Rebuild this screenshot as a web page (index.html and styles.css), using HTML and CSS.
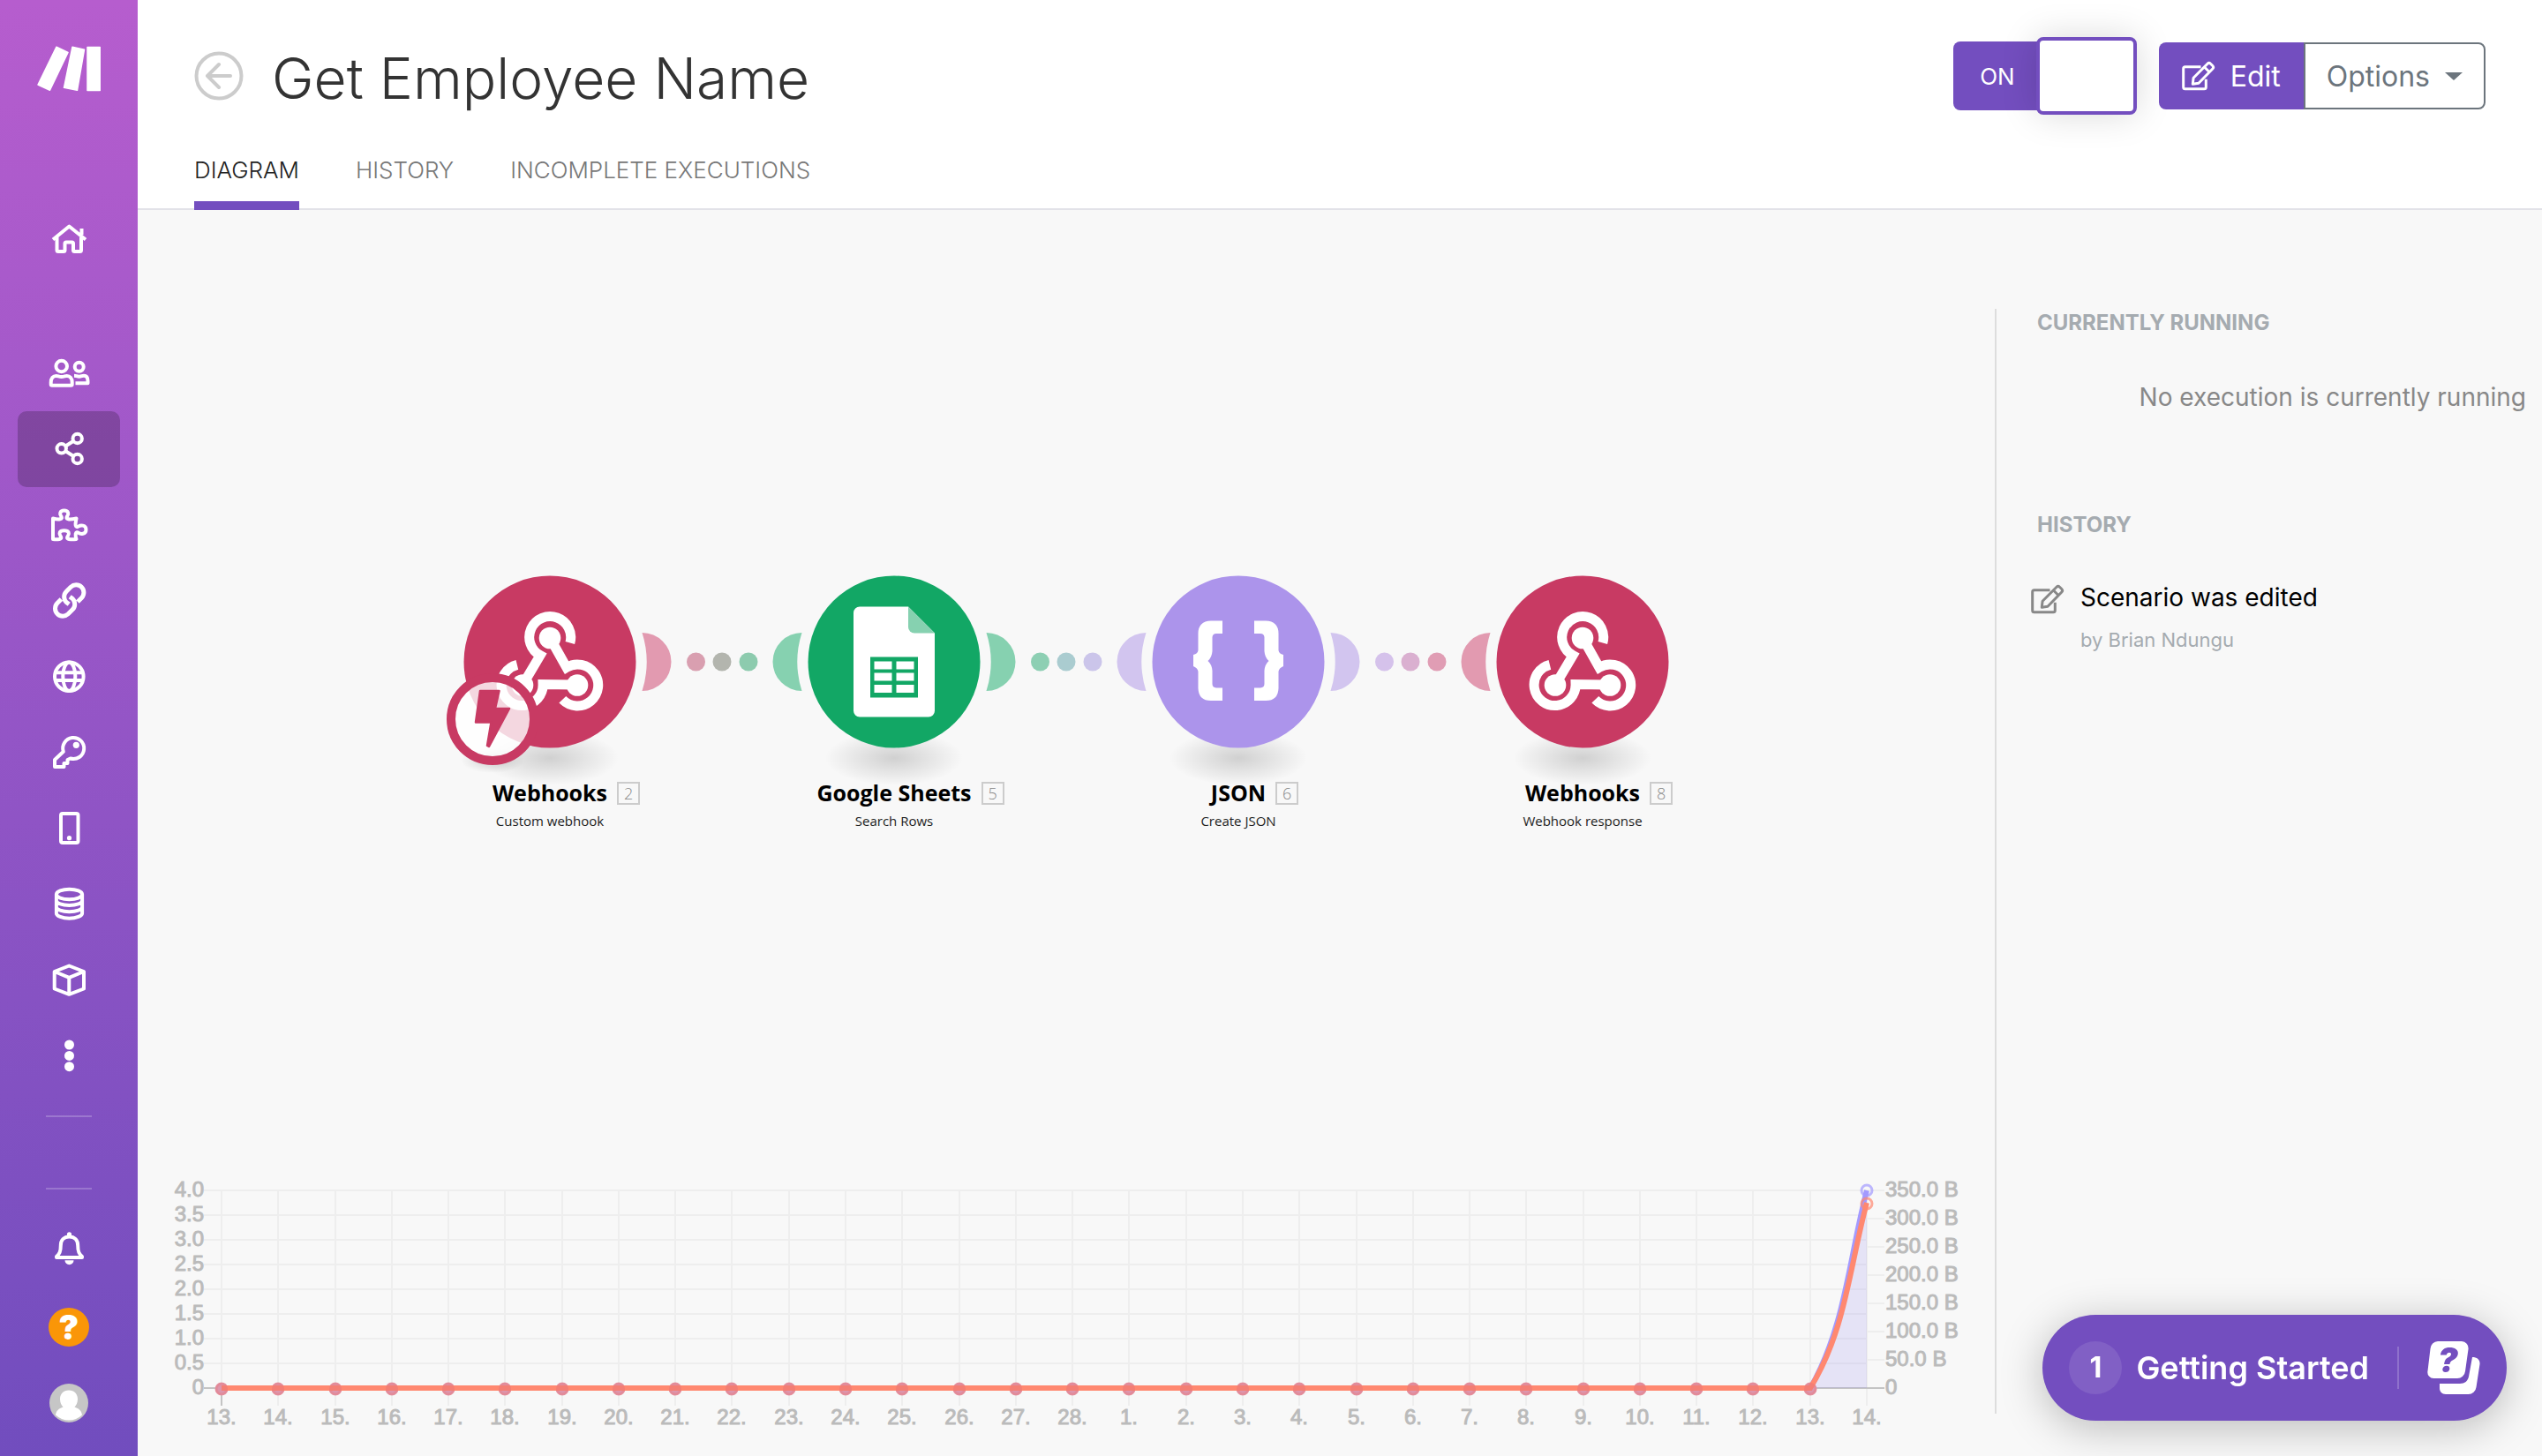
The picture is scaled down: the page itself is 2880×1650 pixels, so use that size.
FILE: index.html
```html
<!DOCTYPE html>
<html lang="en">
<head>
<meta charset="utf-8">
<title>Get Employee Name</title>
<link rel="stylesheet" href="styles.css">
</head>
<body>
<svg class="defs" aria-hidden="true">
  <defs>
    <radialGradient id="shade"><stop offset="0" stop-color="#000" stop-opacity=".16"/><stop offset=".5" stop-color="#000" stop-opacity=".08"/><stop offset="1" stop-color="#000" stop-opacity="0"/></radialGradient>
    <path id="ear" d="M104.500 -33A33 33 0 0 1 104.500 33A109 109 0 0 0 104.500 -33z"/>
    <path id="hook" d="M22.800 -21.500A23.500 23.500 0 1 0 -11 -7.300L-29 23"/>
    <g id="webhook">
      <g fill="none" stroke="#fff" stroke-width="11">
        <use href="#hook"/><use href="#hook" transform="rotate(120 0 8.200)"/><use href="#hook" transform="rotate(240 0 8.200)"/>
      </g>
      <g fill="#fff"><circle cy="-27" r="12.300"/><circle cx="-31" cy="26.500" r="12.300"/><circle cx="31" cy="26.500" r="12.300"/></g>
    </g>
    <g id="pencil" fill="none" stroke="currentColor" stroke-width="3" stroke-linejoin="round">
      <path d="M21.500 6.700H3.700a2 2 0 0 0-2 2v21a2 2 0 0 0 2 2h21.600a2 2 0 0 0 2-2v-9"/>
      <path d="M12.300 26.200l.8-7L29 3.200a2.500 2.500 0 0 1 3.500 0l2.300 2.300a2.500 2.500 0 0 1 0 3.500L19 25.200zM25.500 7l5.500 5.500"/>
    </g>
  </defs>
</svg>
<div class="app">
  <nav class="rail" aria-label="Main">
    <a class="rail-logo" href="#" aria-label="Make">
      <svg width="72" height="52" viewBox="0 0 72 52" fill="#fff" stroke="#fff" stroke-width="1.500" stroke-linejoin="round"><path d="M22 1.200L35 7.500 14.500 50.300 1 44zM40 1.200l13.500 3L45.500 50.300l-15-3zM57 1.500h14.300v49H57z"/></svg>
    </a>
    <a class="rail-item rail-home" href="#" aria-label="Home"><svg viewBox="0 0 48 48"><path d="M6 25.500L24.400 10.500 43 25.500M38.500 20v-7M10.500 23v14.500q0 1.500 1.500 1.500h6q1.500 0 1.500-1.500V30q0-1.500 1.500-1.500h6.500q1.500 0 1.500 1.500v7.500q0 1.500 1.500 1.500h6q1.500 0 1.500-1.500V23"/></svg></a>
    <a class="rail-item" href="#" aria-label="Team"><svg viewBox="0 0 48 48"><circle cx="15.700" cy="16" r="6.300"/><circle cx="35.700" cy="16.700" r="5"/><path d="M3.700 34.500c0-5 2.500-7.500 6-7.500 2 0 3 1 6 1s4-1 6-1c3.500 0 6 2.500 6 7.500v2c0 .8-.5 1.300-1.300 1.300H5c-.8 0-1.300-.5-1.300-1.300zM30 26.700c2 0 3.200 1 5.700 1s3.300-1 5.300-1c3 0 4.500 2.500 4.500 6v2.600H31.500"/></svg></a>
    <a class="rail-item is-active" href="#" aria-label="Scenarios" aria-current="page"><svg viewBox="0 0 48 48"><circle cx="33.700" cy="12" r="5.200"/><circle cx="15.700" cy="23.300" r="5.200"/><circle cx="33.700" cy="35" r="5.200"/><path d="M20 20.700l9.300-6M20 26l9.300 6"/></svg></a>
    <a class="rail-item" href="#" aria-label="Templates"><svg viewBox="0 0 48 48"><path d="M6 16.500c3 .8 6 1.200 8 .8 2.500-.5 2.500-2 1-3.700-1.500-1.700-1.500-6 3.700-6s5.200 4.300 3.700 6c-1.500 1.700-1.500 3.200 1 3.700 2 .4 5 0 9.100-.8-.8 4-1.200 6.500-.8 8 .5 2 2 2 3.300 1 2-1.500 8.500-2 8.500 3.700s-6.500 5.200-8.500 3.700c-1.300-1-2.800-1-3.300 1-.3 2 .2 4.300.8 6-3 .3-6 .3-8.500 0s-2.300-2-1-3.700c1.700-2.300 1.500-6-4.300-6s-6 3.700-4.300 6c1.300 1.700 1.500 3.400-1 3.700s-5 .3-7.400 0z"/></svg></a>
    <a class="rail-item" href="#" aria-label="Connections"><svg class="bold" viewBox="0 0 48 48"><path d="M34 25l4.500-4.500a8.700 8.700 0 0 0-12.300-12.300l-5 5a8.700 8.700 0 0 0 0 12.300l3 2.300M15.400 22l-4.500 4.500a8.700 8.700 0 0 0 12.300 12.300l5-5a8.700 8.700 0 0 0 0-12.300l-3-2.300"/></svg></a>
    <a class="rail-item" href="#" aria-label="Webhooks"><svg viewBox="0 0 48 48"><circle cx="24.300" cy="23.700" r="16.300"/><ellipse cx="24.300" cy="23.700" rx="7" ry="16.300"/><path d="M8 19.300h32.600M8 28h32.600"/></svg></a>
    <a class="rail-item" href="#" aria-label="Keys"><svg viewBox="0 0 48 48"><path d="M17.800 22.800L8 32v8h10.500v-4h4v-4l3.200-1.500a12 12 0 1 0-7.900-7.700z"/><circle class="solid" cx="32.300" cy="15.300" r="3.600"/></svg></a>
    <a class="rail-item" href="#" aria-label="Devices"><svg viewBox="0 0 48 48"><rect x="15" y="7" width="19.500" height="33" rx="2"/><circle class="solid" cx="24.500" cy="34.700" r="2.600"/></svg></a>
    <a class="rail-item" href="#" aria-label="Data stores"><svg viewBox="0 0 48 48"><ellipse cx="24.500" cy="12.500" rx="14.600" ry="5.700"/><path d="M9.900 12.500V34c0 3 6.500 5.700 14.600 5.700S39.100 37 39.100 34V12.500M9.900 19.500c0 3 6.500 5.500 14.600 5.500s14.600-2.500 14.600-5.500M9.900 26.800c0 3 6.500 5.500 14.600 5.500s14.600-2.500 14.600-5.500"/></svg></a>
    <a class="rail-item" href="#" aria-label="Data structures"><svg viewBox="0 0 48 48"><path d="M24.300 7.500L41 14v19.500l-16.700 6.300L7.700 33.500V14zM7.700 14l16.600 6.800L41 14M24.300 20.800v19"/></svg></a>
    <a class="rail-item" href="#" aria-label="More"><svg viewBox="0 0 48 48"><g class="solid"><circle cx="24.500" cy="11" r="5.500"/><circle cx="24.500" cy="23.400" r="5.500"/><circle cx="24.500" cy="35.700" r="5.500"/></g></svg></a>
    <hr class="rail-rule">
    <hr class="rail-rule rail-rule-last">
    <a class="rail-item rail-bell" href="#" aria-label="Notifications"><svg viewBox="0 0 48 48"><path d="M24.500 10.500c-6 0-9.700 4-9.700 10 0 7-1.500 9.500-4.800 12.500v1h29v-1c-3.300-3-4.800-5.500-4.800-12.500 0-6-3.700-10-9.700-10z"/><circle class="solid" cx="24.500" cy="7.800" r="2.600"/><path class="solid" d="M19.500 37.300h10a5 5 0 0 1-10 0z"/></svg></a>
    <a class="rail-item" href="#" aria-label="Help"><span class="rail-help">?</span></a>
    <a class="rail-item" href="#" aria-label="Profile"><svg class="avatar" viewBox="0 0 44 44"><circle class="avatar-bg" cx="22" cy="22" r="22"/><path class="solid" d="M22 7.500c6 0 10 4 10 10 0 4-1.500 7-3.500 9 5 1.500 8 4.500 8.500 9A22 22 0 0 1 7 35.500c.5-4.500 3.500-7.500 8.500-9-2-2-3.500-5-3.500-9 0-6 4-10 10-10z"/></svg></a>
  </nav>

  <main class="main">
    <header class="head">
      <div class="head-row">
        <button class="back" type="button" aria-label="Back"><svg width="56" height="56" viewBox="0 0 56 56" fill="none" stroke="#ccc" stroke-width="4" stroke-linecap="round" stroke-linejoin="round"><circle cx="28" cy="28" r="25.500"/><path d="M41 28H15M28 15L15 28l13 13"/></svg></button>
        <h1 class="title">Get Employee Name</h1>
        <label class="toggle"><span class="toggle-text">ON</span><input class="toggle-knob" type="checkbox" role="switch" checked></label>
        <div class="actions">
          <button class="btn btn-edit" type="button"><svg width="38" height="34" viewBox="0 0 38 34"><use href="#pencil"/></svg>Edit</button>
          <button class="btn btn-options" type="button" aria-haspopup="menu">Options<span class="caret"></span></button>
        </div>
      </div>
      <nav class="tabs" aria-label="Scenario">
        <a class="tab is-current" href="#" aria-current="page">DIAGRAM</a>
        <a class="tab" href="#">HISTORY</a>
        <a class="tab" href="#">INCOMPLETE EXECUTIONS</a>
      </nav>
    </header>

    <div class="content">
      <section class="stage">
        <ol class="flow">
          <li class="module">
            <svg class="module-art" width="390" height="230" viewBox="-195 -98 390 230">
              <ellipse cy="109" rx="78" ry="31" fill="url(#shade)"/>
              <circle r="97.500" fill="#c83a63"/><use href="#webhook"/>
              <use href="#ear" fill="#e29ab0"/>
              <circle cx="165.500" r="10.500" fill="#d99fb0"/><circle cx="195" r="10.500" fill="#b3b5ae"/><circle cx="225" r="10.500" fill="#8dcbae"/>
              <ellipse cx="-65" cy="112" rx="36" ry="14" fill="url(#shade)"/>
              <circle cx="-65" cy="65" r="47" fill="#fff" fill-opacity=".8" stroke="#c83a63" stroke-width="10"/>
              <path d="M-79 33h21.500l-4.500 20h16l-23 43-2-1 4.500-26.500h-17.500z" fill="#c83a63" stroke="#c83a63" stroke-width="2.500" stroke-linejoin="round"/>
            </svg>
            <div class="module-name">Webhooks<span class="module-no">2</span></div>
            <div class="module-sub">Custom webhook</div>
          </li>
          <li class="module">
            <svg class="module-art" width="390" height="230" viewBox="-195 -98 390 230">
              <ellipse cy="109" rx="78" ry="31" fill="url(#shade)"/>
              <circle r="97.500" fill="#12a765"/>
              <path d="M-40 -62.500H16L46 -32.500V55.500a7 7 0 0 1-7 7H-39a7 7 0 0 1-7-7V-55.500a7 7 0 0 1 7-7z" fill="#fff"/>
              <path d="M16 -62.500L46 -32.500H23a7 7 0 0 1-7-7z" fill="#86d1b0"/>
              <path d="M-27 -5.500H27V40.500H-27z" fill="#12a765"/>
              <path d="M-22.500 -.5h20v9h-20zM2.500 -.5h20v9h-20zM-22.500 12.500h20v9h-20zM2.500 12.500h20v9h-20zM-22.500 26h20v9h-20zM2.500 26h20v9h-20z" fill="#fff"/>
              <use href="#ear" fill="#86d1b0"/><use href="#ear" transform="scale(-1 1)" fill="#86d1b0"/>
              <circle cx="165.500" r="10.500" fill="#8dcfb3"/><circle cx="195" r="10.500" fill="#aaccd0"/><circle cx="225" r="10.500" fill="#cbc5ea"/>
            </svg>
            <div class="module-name">Google Sheets<span class="module-no">5</span></div>
            <div class="module-sub">Search Rows</div>
          </li>
          <li class="module">
            <svg class="module-art" width="390" height="230" viewBox="-195 -98 390 230">
              <ellipse cy="109" rx="78" ry="31" fill="url(#shade)"/>
              <circle r="97.500" fill="#ac94eb"/>
              <g fill="#fff"><path id="brace" d="M-18 -46.500H-31Q-45.500 -46 -45.500 -32V-13Q-46 -9 -51 -8V5Q-46 7 -45.500 11V30Q-45 44 -31 44H-18V29.500H-25Q-29.500 29 -29.500 25V10Q-30 3 -34.500 -1Q-30 -5 -29.500 -12V-28Q-29 -32 -25 -32H-18z"/><use href="#brace" transform="scale(-1 1)"/></g>
              <use href="#ear" fill="#d2c5ef"/><use href="#ear" transform="scale(-1 1)" fill="#d2c5ef"/>
              <circle cx="165.500" r="10.500" fill="#d5c2eb"/><circle cx="195" r="10.500" fill="#dab0d0"/><circle cx="225" r="10.500" fill="#e09db4"/>
            </svg>
            <div class="module-name">JSON<span class="module-no">6</span></div>
            <div class="module-sub">Create JSON</div>
          </li>
          <li class="module">
            <svg class="module-art" width="390" height="230" viewBox="-195 -98 390 230">
              <ellipse cy="109" rx="78" ry="31" fill="url(#shade)"/>
              <circle r="97.500" fill="#c83a63"/><use href="#webhook"/>
              <use href="#ear" transform="scale(-1 1)" fill="#e29ab0"/>
            </svg>
            <div class="module-name">Webhooks<span class="module-no">8</span></div>
            <div class="module-sub">Webhook response</div>
          </li>
        </ol>
        <svg class="chart" id="chart" viewBox="0 0 2104 320" role="img" aria-label="Operations and data transfer"></svg>
      </section>

      <aside class="side">
        <h2 class="side-title">CURRENTLY RUNNING</h2>
        <p class="side-empty">No execution is currently running</p>
        <h2 class="side-title">HISTORY</h2>
        <div class="event">
          <svg class="event-icon" width="38" height="34" viewBox="0 0 38 34"><use href="#pencil"/></svg>
          <div>
            <p class="event-name">Scenario was edited</p>
            <p class="event-by">by Brian Ndungu</p>
          </div>
        </div>
      </aside>
    </div>
  </main>
</div>
<button class="starter" type="button">
  <span class="starter-count">1</span>
  <span class="starter-text">Getting Started</span>
  <span class="starter-rule"></span>
  <svg width="60" height="60" viewBox="0 0 60 60"><path fill="#fff" d="M12 0h27a8 8 0 0 1 7.500 9l-3.500 25a9 9 0 0 1-9 8H7.500a7 7 0 0 1-7-8.500l3-25A9 9 0 0 1 12 0zM51 18c5.500 0 9 3 8.500 8l-4 26a9 9 0 0 1-9 8H21c-4.500 0-7-3-7-7v-5h23c5.500 0 9-3 10-8z"/><text class="starter-mark" x="23.500" y="35" text-anchor="middle">?</text></svg>
</button>
<script src="chart.js"></script>
</body>
</html>
```
FILE: styles.css
```css
* { box-sizing: border-box; }
body { margin: 0; background: #f8f8f8; color: #333; font-family: Inter, "Liberation Sans", sans-serif; }
button { font: inherit; border: 0; padding: 0; margin: 0; background: none; cursor: pointer; }
a { color: inherit; text-decoration: none; }
h1, h2, p, ol { margin: 0; padding: 0; }
svg { display: block; }
.defs { position: absolute; width: 0; height: 0; }

.app { display: grid; grid-template-columns: 156px minmax(0, 1fr); min-height: 100vh; }

/* Left rail */
.rail { display: flex; flex-direction: column; align-items: center; padding-top: 52px; background: linear-gradient(#b65dce, #714dbe); }
.rail-logo { margin-bottom: 123px; }
.rail-item { display: flex; align-items: center; justify-content: center; width: 116px; height: 86px; border-radius: 10px; }
.rail-item svg { width: 48px; height: 48px; fill: none; stroke: #fff; stroke-width: 4px; stroke-linejoin: round; }
.rail-item svg.bold { stroke-width: 5px; }
.rail-item .solid { fill: #fff; stroke: none; }
.rail-item.is-active { background: rgba(0, 0, 0, .2); }
.rail-home { margin-bottom: 67px; }
.rail-rule { width: 52px; height: 2px; margin: 24px 0 0; border: 0; background: rgba(255, 255, 255, .22); }
.rail-rule-last { margin-top: 80px; }
.rail-bell { margin: 24px 0 3px; }
.rail-help { display: flex; align-items: center; justify-content: center; width: 46px; height: 44px; border-radius: 50%; background: #fa9608; color: #fff; font-size: 38px; font-weight: 900; line-height: 44px; }
.rail-item svg.avatar { width: 44px; height: 44px; }
.avatar-bg { fill: #c6c6c6; stroke: none; }

/* Header */
.main { display: flex; flex-direction: column; }
.head { background: #fff; border-bottom: 2px solid #e2e2e8; padding: 42px 64px 0; }
.head-row { display: flex; align-items: center; height: 88px; }
.title { flex: 1; margin-left: 32px; padding-top: 6px; font-size: 64px; line-height: 80px; font-weight: 300; color: #333; }
.toggle { display: flex; align-items: center; height: 78px; padding-left: 30px; border-radius: 8px; background: #734ebf; color: #fff; }
.toggle-text { font-size: 26px; margin-right: 24px; }
.toggle-knob { appearance: none; width: 114px; height: 88px; margin: 0; border: 4px solid #734ebf; border-radius: 8px; background: #fff; box-shadow: 0 0 40px rgba(0, 0, 0, .15); }
.actions { display: flex; margin-left: 25px; }
.btn { display: flex; align-items: center; height: 76px; font-size: 32px; }
.btn-edit { gap: 17px; padding: 0 26px; border-radius: 8px 0 0 8px; background: #734ebf; color: #fff; }
.btn-options { gap: 17px; padding: 0 24px; border: 2px solid #6c757d; border-radius: 0 8px 8px 0; background: #fff; color: #6c757d; }
.caret { border: 10px solid transparent; border-top: 9px solid #6c757d; border-bottom: 0; }
.tabs { display: flex; gap: 64px; margin: 47px 0 -2px; }
.tab { padding-bottom: 19px; border-bottom: 10px solid transparent; font-size: 26px; line-height: 32px; font-weight: 300; color: #777; }
.tab.is-current { border-color: #734ebf; color: #222; }

/* Canvas */
.content { flex: 1; display: flex; }
.stage { flex: 1; min-width: 0; display: flex; flex-direction: column; }
.flow { flex: 1; display: flex; align-items: center; justify-content: center; padding-top: 24px; list-style: none; }
.module { display: flex; flex-direction: column; align-items: center; width: 390px; font-family: "Open Sans", "Noto Sans", sans-serif; color: #000; }
.module-art { overflow: visible; margin-bottom: 2px; }
.module-name { position: relative; font-size: 25px; line-height: 28px; font-weight: 700; }
.module-no { position: absolute; left: 100%; top: 2px; width: 26px; height: 26px; margin-left: 11px; border: 2px solid #ccc; font-size: 18px; line-height: 22px; font-weight: 300; text-align: center; color: #888; }
.module-sub { margin-top: 8px; font-size: 15px; line-height: 20px; color: #222; }
.chart { width: 100%; height: auto; font: 24px "Liberation Sans", Arial, sans-serif; }
.chart text { fill: #bbb; stroke: #bbb; stroke-width: 1px; }

/* Right column */
.side { width: 620px; margin: 112px 0 48px; padding-left: 46px; border-left: 2px solid #ddd; }
.side-title { font-size: 24px; line-height: 32px; font-weight: 700; color: #a5abb0; }
.side-empty { margin: 51px 18px 112px 0; font-size: 28px; line-height: 34px; text-align: right; color: #888; }
.event { display: flex; gap: 18px; margin: 38px 0 0 -7px; }
.event-icon { margin-top: 13px; color: #888; }
.event-name { margin-top: 11px; font-size: 28px; line-height: 34px; color: #000; }
.event-by { margin-top: 17px; font-size: 22px; line-height: 28px; color: #a5abb0; }

/* Floating launcher */
.starter { position: fixed; right: 40px; bottom: 40px; display: flex; align-items: center; height: 120px; padding: 0 30px; border-radius: 60px; background: #734ebf; color: #fff; box-shadow: 0 8px 48px rgba(0, 0, 0, .25); }
.starter-count { width: 60px; height: 60px; border-radius: 50%; background: rgba(255, 255, 255, .1); font-size: 32px; line-height: 60px; font-weight: 700; }
.starter-text { margin: 0 32px 0 16px; font-size: 36px; font-weight: 600; }
.starter-rule { width: 2px; height: 48px; margin-right: 32px; background: #8f71cc; }
.starter-mark { fill: #734ebf; font: italic 900 38px Inter, sans-serif; }
```
FILE: chart.js
```js
const chart = document.getElementById("chart");
const days = [13,14,15,16,17,18,19,20,21,22,23,24,25,26,27,28,1,2,3,4,5,6,7,8,9,10,11,12,13,14];
const left = 95, right = 1959, top_ = 19, base = 243;
const x = i => Math.round(left + i * (right - left) / (days.length - 1));
let out = "";
const line = (x1, y1, x2, y2, c) => { out += `<path d="M${x1} ${y1}L${x2} ${y2}" stroke="${c}" stroke-width="2"/>`; };
const label = (tx, ty, t, a) => { out += `<text x="${tx}" y="${ty}" text-anchor="${a}">${t}</text>`; };

days.forEach((d, i) => {
  line(x(i), top_, x(i), base + 20, "#eee");
  label(x(i), base + 41, d + ".", "middle");
});
for (let i = 0; i <= 8; i++) {
  const y = base - i * 28;
  line(left - 20, y, right, y, i ? "#eee" : "#c4c4c4");
  label(left - 20, y + 7, i ? (i / 2).toFixed(1) : "0", "end");
}
for (let i = 0; i <= 7; i++) {
  const y = base - i * 32;
  line(right, y, right + 20, y, i ? "#eee" : "#c4c4c4");
  label(right + 21, y + 7, i ? (i * 50).toFixed(1) + " B" : "0", "start");
}
line(left, base, left, base + 20, "#c4c4c4");

const p = x(28);
const curve = (rise, end) => `M${left} ${base}H${p}C${p + 40} ${base - rise} ${right - 20} ${end + 75} ${right} ${end}`;
const transfer = curve(70, top_);
const operations = curve(65, 33);
out += `<path d="${transfer}V${base}z" fill="#9a90f0" fill-opacity=".2"/>`;
out += `<path d="${transfer}" fill="none" stroke="#a39aff" stroke-width="6"/>`;
out += `<circle cx="${right}" cy="${top_}" r="6" fill="none" stroke="#a39aff" stroke-opacity=".7" stroke-width="3"/>`;
for (let i = 0; i < 29; i++) out += `<circle cx="${x(i)}" cy="${base + 1}" r="6" fill="#e0a8bc" stroke="#e898a2" stroke-width="3"/>`;
out += `<path d="${operations}" fill="none" stroke="#ff8870" stroke-width="6"/>`;
for (let i = 0; i < 29; i++) out += `<circle cx="${x(i)}" cy="${base + 1}" r="7" fill="#d06080" fill-opacity=".25"/>`;
out += `<circle cx="${right}" cy="34" r="6" fill="none" stroke="#ff8870" stroke-opacity=".7" stroke-width="3"/>`;
chart.innerHTML = out;
```
